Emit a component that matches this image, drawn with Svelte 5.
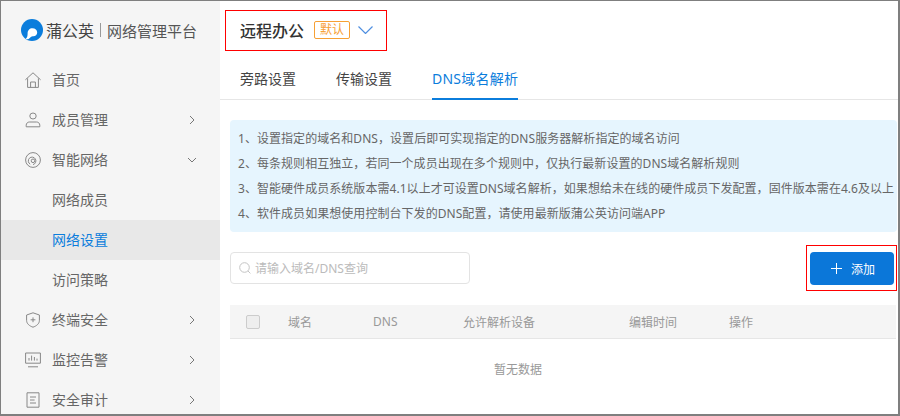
<script>
  const rules = [
    '1、设置指定的域名和DNS，设置后即可实现指定的DNS服务器解析指定的域名访问',
    '2、每条规则相互独立，若同一个成员出现在多个规则中，仅执行最新设置的DNS域名解析规则',
    '3、智能硬件成员系统版本需4.1以上才可设置DNS域名解析，如果想给未在线的硬件成员下发配置，固件版本需在4.6及以上',
    '4、软件成员如果想使用控制台下发的DNS配置，请使用最新版蒲公英访问端APP'
  ]
  const tabs = ['旁路设置', '传输设置', 'DNS域名解析']
  const columns = ['域名', 'DNS', '允许解析设备', '编辑时间', '操作']
</script>

<div class="window">
  <aside class="sidebar">
    <div class="brand">
      <svg class="logo" viewBox="0 0 22 22" width="22" height="22">
        <circle cx="11" cy="11" r="11" fill="#0b7ddc" />
        <path d="M4.6 20 C6.4 18.4 6.6 16.4 6.6 14.4 C6.6 11.2 8.6 9.2 11.4 9.2 C14.2 9.2 16.2 11 16.2 13.4 C16.2 15.8 14.2 17.4 12 17.2 C10.4 17.1 9.4 18.2 8.2 19.4 C7.2 20.3 5.8 20.6 4.6 20 Z" fill="#fff" />
      </svg>
      <span class="brand-name">蒲公英</span>
      <span class="brand-sep"></span>
      <span class="brand-sub">网络管理平台</span>
    </div>

    <div class="nav-item">
      <svg class="nav-icon" viewBox="0 0 16 16"><path d="M.4 7.8 8 .8l7.6 7M2.6 6.4V15.4h10.8V6.4M5.6 15.4V10h4.8v5.4" /></svg>
      <span>首页</span>
    </div>
    <div class="nav-item">
      <svg class="nav-icon" viewBox="0 0 16 16"><ellipse cx="8" cy="4" rx="3.2" ry="3" /><path d="M1.2 14.8v-1.6c0-2 1.6-3.2 3.2-3.2h7.2c1.6 0 3.2 1.2 3.2 3.2v1.6z" /></svg>
      <span>成员管理</span>
      <svg class="caret" viewBox="0 0 10 10"><path d="M3 1l4 4-4 4" /></svg>
    </div>
    <div class="nav-item">
      <svg class="nav-icon" viewBox="0 0 16 16"><circle cx="8" cy="8" r="7.4" /><path d="M5.2 12.2A3.8 3.8 0 1 1 8 12.6" /><circle cx="8" cy="8.8" r="1.8" /></svg>
      <span>智能网络</span>
      <svg class="caret" viewBox="0 0 10 10"><path d="M1 3l4 4 4-4" /></svg>
    </div>
    <div class="nav-item sub"><span>网络成员</span></div>
    <div class="nav-item sub active"><span>网络设置</span></div>
    <div class="nav-item sub"><span>访问策略</span></div>
    <div class="nav-item">
      <svg class="nav-icon" viewBox="0 0 16 16"><path d="M8 .8 14.4 3v5.4c0 3.4-3 5.6-6.4 6.8C4.6 14 1.6 11.8 1.6 8.4V3zM8 5.4v4.8M5.6 7.8h4.8" /></svg>
      <span>终端安全</span>
      <svg class="caret" viewBox="0 0 10 10"><path d="M3 1l4 4-4 4" /></svg>
    </div>
    <div class="nav-item">
      <svg class="nav-icon" viewBox="0 0 16 16"><path d="M.6 1h14.8v10.2H.6zM3 14.8h10M4 8.6V6M6.6 8.6V3.6M9.4 8.6V5M12 8.6V6.6" /></svg>
      <span>监控告警</span>
      <svg class="caret" viewBox="0 0 10 10"><path d="M3 1l4 4-4 4" /></svg>
    </div>
    <div class="nav-item">
      <svg class="nav-icon" viewBox="0 0 16 16"><path d="M2 .8h12v14.4H2zM5 5h6M5 8h4.6M5 11h6" /></svg>
      <span>安全审计</span>
      <svg class="caret" viewBox="0 0 10 10"><path d="M3 1l4 4-4 4" /></svg>
    </div>
  </aside>

  <main class="main">
    <div class="group-select">
      <span class="group-name">远程办公</span>
      <span class="default-tag">默认</span>
      <svg class="group-caret" viewBox="0 0 15 8"><path d="M.5.5 7.5 7.5l7-7" /></svg>
    </div>

    <div class="tabs">
      {#each tabs as tab, i}
        <div class={i === 2 ? 'tab active' : 'tab'}>{tab}</div>
      {/each}
    </div>

    <div class="notice">
      {#each rules as rule}
        <p>{rule}</p>
      {/each}
    </div>

    <div class="toolbar">
      <div class="search">
        <svg viewBox="0 0 12 12" width="12" height="12"><circle cx="5.5" cy="5.5" r="4.8" /><path d="M9 9l2.4 2.4" /></svg>
        <span>请输入域名/DNS查询</span>
      </div>
      <div class="add-mark">
        <button class="add-btn">
          <svg viewBox="0 0 11 11" width="11" height="11"><path d="M5.5 0v11M0 5.5h11" /></svg>
          添加
        </button>
      </div>
    </div>

    <div class="table-head">
      <span class="checkbox"></span>
      {#each columns as col}
        <span>{col}</span>
      {/each}
    </div>
    <div class="empty">暂无数据</div>
  </main>
</div>

<style>
  :global(body) {
    margin: 0;
    background: #fff;
  }

  .window {
    box-sizing: border-box;
    width: 900px;
    height: 416px;
    display: flex;
    overflow: hidden;
    background: #fff;
    border: 1px solid #7f7f7f;
    border-width: 1px 2px 2px 1px;
    font-family: "Noto Sans", "Noto Sans CJK SC", sans-serif;
    color: #555;
  }

  .sidebar {
    flex: none;
    width: 219px;
    background: #f5f5f5;
  }

  .brand {
    height: 59px;
    display: flex;
    align-items: center;
    padding: 0 0 1px 20px;
    box-sizing: border-box;
  }

  .logo { margin-right: 3px; }

  .brand-name {
    font-size: 16px;
    color: #444;
  }

  .brand-sep {
    width: 1px;
    height: 14px;
    margin: 0 6px;
    background: #999;
  }

  .brand-sub {
    font-size: 15px;
    color: #555;
  }

  .nav-item {
    position: relative;
    height: 40px;
    display: flex;
    align-items: center;
    padding-left: 24px;
    font-size: 14px;
    color: #666;
  }

  .nav-item span {
    position: relative;
    top: -1px;
  }

  .nav-item.sub { padding-left: 51px; }

  .nav-item.active {
    background: #e8e8e8;
    color: #0b7ddc;
  }

  .nav-icon {
    width: 16px;
    height: 16px;
    margin-right: 11px;
    fill: none;
    stroke: #888;
    stroke-width: 1;
  }

  .caret {
    width: 10px;
    height: 10px;
    margin-left: auto;
    margin-right: 23px;
    fill: none;
    stroke: #777;
    stroke-width: 1;
  }

  .main {
    flex: 1;
    min-width: 0;
  }

  .group-select {
    box-sizing: border-box;
    width: 162px;
    height: 41px;
    margin: 9px 0 0 5px;
    display: flex;
    align-items: center;
    padding: 0 0 2px 14px;
    border: 1px solid #f00;
  }

  .group-name {
    font-size: 16px;
    font-weight: 500;
    color: #333;
  }

  .default-tag {
    box-sizing: border-box;
    width: 36px;
    height: 18px;
    margin-left: 10px;
    text-align: center;
    font-size: 12px;
    line-height: 15px;
    color: #f7a035;
    border: 1px solid #f7a035;
    border-radius: 2px;
  }

  .group-caret {
    width: 15px;
    height: 8px;
    margin-left: 8px;
    fill: none;
    stroke: #4f8fe0;
    stroke-width: 1.2;
  }

  .tabs {
    height: 48px;
    display: flex;
    align-items: flex-start;
    gap: 40px;
    padding-left: 20px;
    border-bottom: 1px solid #e6e6e6;
  }

  .tab {
    box-sizing: border-box;
    height: 49px;
    padding-top: 18px;
    font-size: 14px;
    line-height: 20px;
    color: #444;
  }

  .tab.active {
    letter-spacing: 0.25px;
    color: #0b7ddc;
    border-bottom: 2px solid #0b7ddc;
  }

  .notice {
    box-sizing: border-box;
    height: 112px;
    margin: 20px 1px 0 10px;
    padding: 6px 0 6px 8px;
    background: #e6f5fe;
    border-radius: 4px;
  }

  .notice p {
    margin: 0;
    font-size: 12px;
    line-height: 25px;
    letter-spacing: 0.05px;
    white-space: nowrap;
    color: #666;
  }

  .toolbar {
    display: flex;
    justify-content: space-between;
    align-items: flex-start;
    margin: 13px 1px 0 10px;
  }

  .search {
    box-sizing: border-box;
    width: 240px;
    height: 32px;
    margin-top: 7px;
    display: flex;
    align-items: center;
    gap: 4px;
    padding-left: 8px;
    font-size: 12px;
    color: #bbb;
    border: 1px solid #e3e3e3;
    border-radius: 4px;
  }

  .search svg {
    fill: none;
    stroke: #c4c4c4;
  }

  .add-mark {
    box-sizing: border-box;
    width: 91px;
    height: 46px;
    padding: 6px 2px 6px 3px;
    border: 1px solid #f00;
  }

  .add-btn {
    width: 84px;
    height: 33px;
    display: flex;
    align-items: center;
    justify-content: center;
    gap: 9px;
    padding: 0 0 0 2px;
    font: inherit;
    font-size: 12px;
    color: #fff;
    background: #0b77d9;
    border: none;
    border-radius: 4px;
  }

  .add-btn svg {
    fill: none;
    stroke: #fff;
  }

  .table-head {
    box-sizing: border-box;
    height: 34px;
    margin: 14px 2px 0 10px;
    display: grid;
    grid-template-columns: 42px 85px 90px 166px 100px 1fr;
    align-items: center;
    padding-left: 16px;
    font-size: 12px;
    color: #999;
    background: #f5f5f5;
    border-bottom: 1px solid #e6e6e6;
  }

  .checkbox {
    box-sizing: border-box;
    width: 14px;
    height: 14px;
    background: #eee;
    border: 1px solid #ccc;
    border-radius: 2px;
  }

  .empty {
    width: 576px;
    margin: 21px 0 0 10px;
    text-align: center;
    font-size: 12px;
    line-height: 20px;
    color: #999;
  }
</style>
